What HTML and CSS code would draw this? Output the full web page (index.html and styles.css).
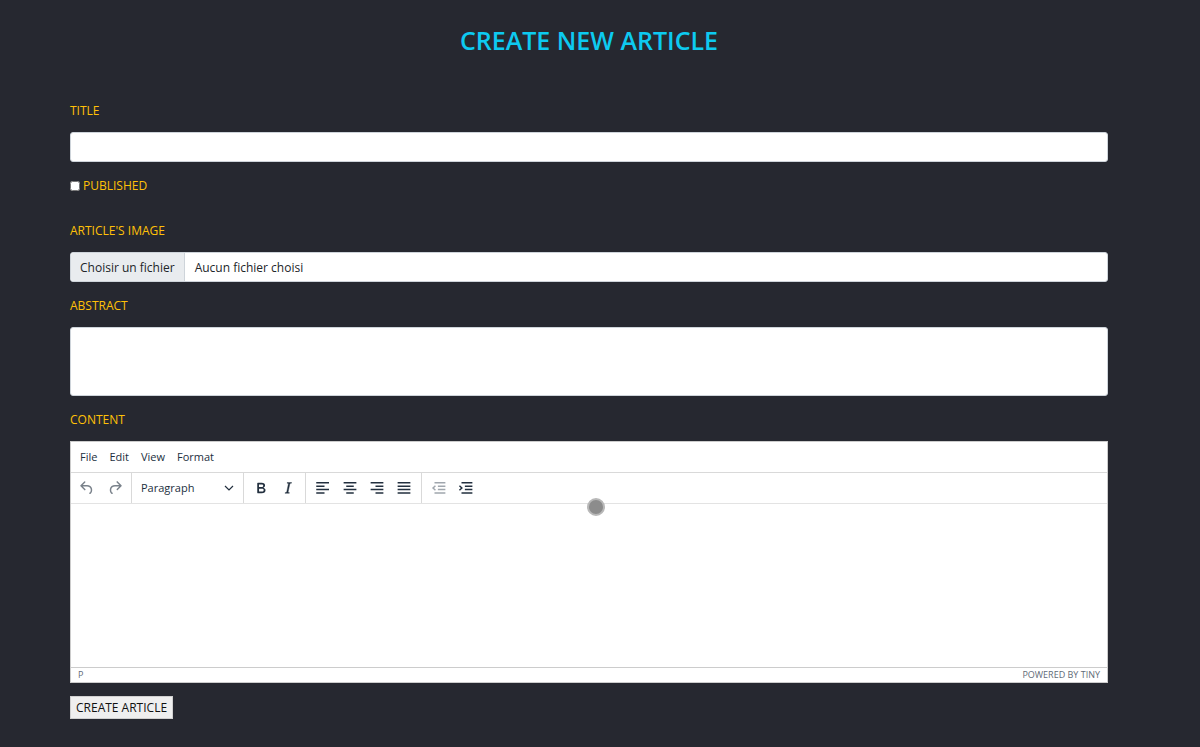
FILE: index.html
```html
<!DOCTYPE html>
<html lang="en">
<head>
<meta charset="utf-8">
<title>Create new article</title>
<link rel="stylesheet" href="styles.css">
</head>
<body>
<main class="page">
  <h1 class="heading">CREATE NEW ARTICLE</h1>
  <form class="form">
    <div class="field">
      <label class="label" for="title">TITLE</label>
      <input class="control" id="title" type="text">
    </div>
    <div class="check">
      <input class="check-box" id="published" type="checkbox">
      <label class="label" for="published">PUBLISHED</label>
    </div>
    <div class="field">
      <label class="label" for="image">ARTICLE'S IMAGE</label>
      <div class="control file">
        <span class="file-button">Choisir un fichier</span>
        <span class="file-name">Aucun fichier choisi</span>
        <input class="file-input" id="image" type="file">
      </div>
    </div>
    <div class="field">
      <label class="label" for="abstract">ABSTRACT</label>
      <textarea class="control area" id="abstract"></textarea>
    </div>
    <div class="field">
      <label class="label" for="content">CONTENT</label>
      <div class="editor">
        <div class="menubar">
          <button class="menu" type="button">File</button>
          <button class="menu" type="button">Edit</button>
          <button class="menu" type="button">View</button>
          <button class="menu" type="button">Format</button>
        </div>
        <div class="toolbar">
          <div class="group history">
            <button class="tool muted" type="button" aria-label="Undo"><svg class="icon" viewBox="0 0 24 24"><path d="M6.4 8H12c3.7 0 6.2 2 6.8 5.1.6 2.7-.4 5.6-2.3 6.8a1 1 0 01-1-1.8c1.1-.6 1.8-2.7 1.4-4.6-.5-2.1-2.1-3.5-4.9-3.5H6.4l3.3 3.3a1 1 0 11-1.4 1.4l-5-5a1 1 0 010-1.4l5-5a1 1 0 011.4 1.4L6.4 8z"/></svg></button>
            <button class="tool muted" type="button" aria-label="Redo"><svg class="icon" viewBox="0 0 24 24"><path d="M17.6 10H12c-2.8 0-4.4 1.4-4.9 3.5-.4 2 .3 4 1.4 4.6a1 1 0 11-1 1.8c-2-1.2-2.9-4.1-2.3-6.8.6-3 3-5.1 6.8-5.1h5.600l-3.300-3.300a1 1 0 111.400-1.400l5 5a1 1 0 010 1.400l-5 5a1 1 0 01-1.400-1.400l3.300-3.300z"/></svg></button>
          </div>
          <div class="group">
            <button class="format" type="button"><span>Paragraph</span><svg class="chevron" viewBox="0 0 10 10"><path d="M1 3l4 4 4-4" fill="none" stroke="currentColor" stroke-width="1.2"/></svg></button>
          </div>
          <div class="group tools">
            <button class="tool" type="button" aria-label="Bold"><svg class="icon" viewBox="0 0 24 24"><path fill-rule="evenodd" d="M7.8 19c-.3 0-.5 0-.6-.2l-.2-.5V5.700c0-.2 0-.4.2-.5l.6-.2h5c1.500 0 2.700.3 3.500 1 .7.6 1.100 1.400 1.100 2.500a3 3 0 01-.6 1.900c-.4.6-1 1-1.600 1.200.4.1.9.3 1.300.6s.8.7 1 1.200c.4.4.5 1 .5 1.600 0 1.300-.4 2.300-1.300 3-.8.7-2.100 1-3.800 1H7.800zm5-8.300c.6 0 1.200-.1 1.600-.5.4-.3.6-.7.6-1.300 0-1.100-.8-1.700-2.300-1.700H9.300v3.500h3.400zm.5 6c.7 0 1.300-.1 1.700-.4.4-.4.6-.9.6-1.500s-.2-1-.7-1.400c-.4-.3-1-.4-2-.4H9.400v3.800h4z"/></svg></button>
            <button class="tool" type="button" aria-label="Italic"><svg class="icon" viewBox="0 0 24 24"><path d="M16.700 4.700l-.1.900h-.3c-.6 0-1 0-1.400.3-.3.3-.4.6-.5 1.100l-2.100 9.800v.6c0 .5.400.8 1.400.8h.2l-.2.800H8l.2-.8h.2c1.100 0 1.800-.5 2-1.500l2-9.800.1-.5c0-.6-.4-.8-1.400-.8h-.3l.2-.9h5.800z" stroke="currentColor" stroke-width=".5"/></svg></button>
          </div>
          <div class="group tools">
            <button class="tool" type="button" aria-label="Align left"><svg class="icon" viewBox="0 0 24 24"><path d="M3 4h17v2H3zM3 8.500h11v2H3zM3 13h17v2H3zM3 17.500h11v2H3z"/></svg></button>
            <button class="tool" type="button" aria-label="Align center"><svg class="icon" viewBox="0 0 24 24"><path d="M3.500 4h17v2h-17zM7 8.500h10v2H7zM3.500 13h17v2h-17zM7 17.500h10v2H7z"/></svg></button>
            <button class="tool" type="button" aria-label="Align right"><svg class="icon" viewBox="0 0 24 24"><path d="M3.500 4h17v2h-17zM10 8.500h10.500v2H10zM3.500 13h17v2h-17zM10 17.500h10.500v2H10z"/></svg></button>
            <button class="tool" type="button" aria-label="Justify"><svg class="icon" viewBox="0 0 24 24"><path d="M3.500 4h17v2h-17zM3.500 8.500h17v2h-17zM3.500 13h17v2h-17zM3.500 17.500h17v2h-17z"/></svg></button>
          </div>
          <div class="group">
            <button class="tool faint" type="button" aria-label="Decrease indent"><svg class="icon" viewBox="0 0 24 24"><path d="M6 4h14.500v2H6zM10.500 8.500h10v2h-10zM10.500 13h10v2h-10zM6 17.500h14.500v2H6zM6.600 8.200L2.600 12l4 3.800 1.300-1.400L5.400 12l2.500-2.400z"/></svg></button>
            <button class="tool" type="button" aria-label="Increase indent"><svg class="icon" viewBox="0 0 24 24"><path d="M6 4h14.500v2H6zM10.500 8.500h10v2h-10zM10.500 13h10v2h-10zM6 17.500h14.500v2H6zM3.900 8.200L7.900 12l-4 3.800-1.300-1.400L5.100 12 2.600 9.600z"/></svg></button>
          </div>
        </div>
        <div class="canvas">
          <textarea class="content" id="content"></textarea>
          <span class="pointer"></span>
        </div>
        <div class="status"><span>P</span><a class="brand" href="#">POWERED BY TINY</a></div>
      </div>
    </div>
    <button class="submit" type="submit">CREATE ARTICLE</button>
  </form>
</main>
</body>
</html>
```
FILE: styles.css
```css
* { box-sizing: border-box; }
body {
  margin: 0;
  background: #262830;
  color: #212529;
  font: 13px/20px "Open Sans", "Noto Sans", sans-serif;
}
button, input, textarea { font: inherit; color: inherit; }
button { border: 0; padding: 0; background: none; }
.page { padding: 24px 92px 28px 70px; }
.heading {
  margin: 0 0 44px;
  color: #0dcaf0;
  font-size: 25px;
  font-weight: 600;
  line-height: 32px;
  text-align: center;
}
.form { display: flex; flex-direction: column; align-items: stretch; gap: 13px; }
.field { display: flex; flex-direction: column; gap: 10px; }
.label { color: #ffc107; font-size: 12px; line-height: 22px; }
.control {
  width: 100%;
  height: 30px;
  border: 1px solid #ced4da;
  border-radius: 3px;
  background: #fff;
  padding: 4px 10px;
}
.check { display: flex; align-items: center; gap: 3px; margin-bottom: 10px; }
.check-box { width: 10px; height: 10px; margin: 0; }
.file { position: relative; display: flex; padding: 0; overflow: hidden; font-size: 12px; line-height: 29px; }
.file-button { padding: 0 9px; background: #e9ecef; border-right: 1px solid #ced4da; }
.file-name { padding: 0 10px; }
.file-input { position: absolute; inset: 0; width: 100%; opacity: 0; }
.area { display: block; height: 69px; resize: none; }
.editor { border: 1px solid #ccc; background: #fff; color: #222f3e; }
.menubar { display: flex; gap: 12px; height: 31px; padding: 0 9px; border-bottom: 1px solid #d9d9d9; font-size: 11px; }
.toolbar { display: flex; height: 31px; border-bottom: 1px solid #e3e3e3; }
.group { display: flex; align-items: center; padding: 0 3px; border-right: 1px solid #d9d9d9; }
.group:last-child { border-right: 0; }
.tool { display: flex; align-items: center; justify-content: center; width: 27px; height: 28px; }
.history { padding: 0 2px; }
.history .tool { width: 28px; }
.tools { padding-right: 4px; }
.icon { width: 18px; height: 18px; fill: currentColor; }
.muted { color: #7a828b; }
.faint { color: #a0a6ad; }
.format { display: flex; align-items: center; justify-content: space-between; width: 105px; padding: 0 6px; font-size: 11px; }
.chevron { width: 10px; height: 10px; }
.canvas { position: relative; height: 163px; }
.content { display: block; width: 100%; height: 100%; padding: 12px; border: 0; outline: 0; resize: none; background: none; }
.pointer {
  position: absolute;
  left: calc(50% - 2px);
  top: -6px;
  width: 18px;
  height: 18px;
  border: 2px solid #b8b8b8;
  border-radius: 50%;
  background: #8c8c8c;
}
.status { display: flex; justify-content: space-between; padding: 0 7px; border-top: 1px solid #ccc; color: #5f6b78; font-size: 9px; line-height: 14px; }
.brand { color: inherit; text-decoration: none; }
.submit { align-self: flex-start; height: 23px; padding: 0 5px; border: 1px solid #d0d0d0; background: #efefef; color: #111; font-size: 12px; line-height: 21px; }
```
